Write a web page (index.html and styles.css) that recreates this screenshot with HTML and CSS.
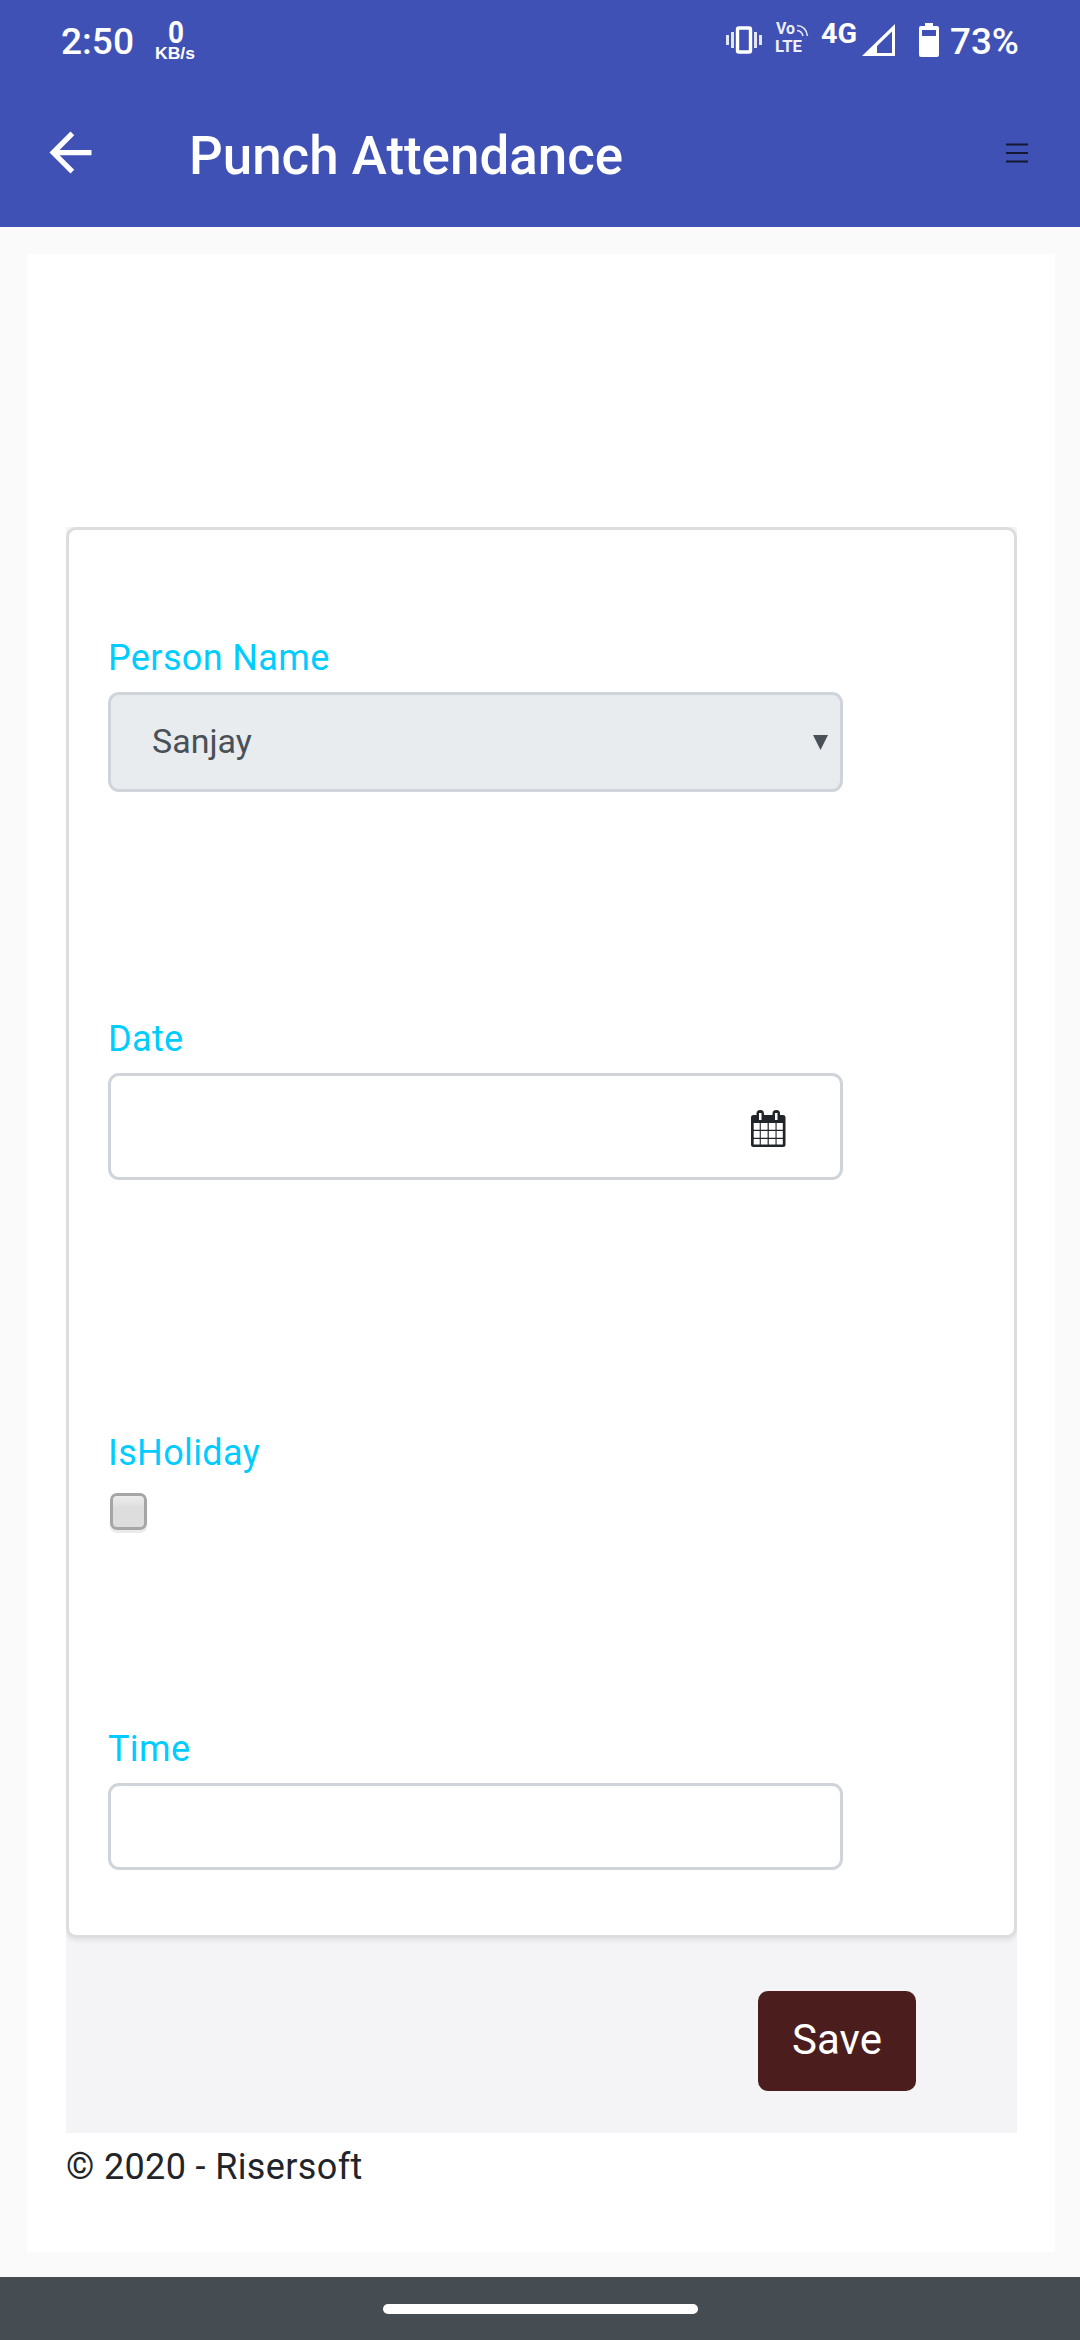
FILE: index.html
```html
<!DOCTYPE html>
<html lang="en">
<head>
<meta charset="utf-8">
<title>Punch Attendance</title>
<link rel="stylesheet" href="styles.css">
</head>
<body>
<div class="screen">
  <header class="top">
    <div class="statusbar">
      <svg class="status-left" width="150" height="80" viewBox="60 0 150 80">
        <text class="status-text" x="61" y="54" textLength="73" lengthAdjust="spacingAndGlyphs">2:50</text>
        <text class="speed" x="168" y="43" textLength="16" lengthAdjust="spacingAndGlyphs">0</text>
        <text class="unit" x="155" y="59" textLength="40" lengthAdjust="spacingAndGlyphs">KB/s</text>
      </svg>
      <svg class="status-right" width="300" height="80" viewBox="720 0 300 80">
        <rect x="737.5" y="28" width="13" height="24" rx="1.5" fill="none" stroke="#fff" stroke-width="3.4"/>
        <path d="M727.5 35v10M732.5 32v16M755.5 32v16M760.5 35v10" stroke="#fff" stroke-width="3" opacity=".85"/>
        <text class="volte" x="776" y="34" textLength="19" lengthAdjust="spacingAndGlyphs">Vo</text>
        <text class="volte" x="775" y="52" textLength="27" lengthAdjust="spacingAndGlyphs">LTE</text>
        <path d="M797 25.500Q806 26 807.500 36M797 30.500Q802 31 803 36" stroke="#fff" stroke-width="1.600" fill="none" opacity=".85"/>
        <text class="net" x="821" y="43" textLength="36" lengthAdjust="spacingAndGlyphs">4G</text>
        <path d="M895 24v32h-33z M892 31.500L877 46v7h15z" fill="#fff" fill-rule="evenodd"/>
        <path d="M925 23h8v3h4q2 0 2 2v27q0 2-2 2h-16q-2 0-2-2v-27q0-2 2-2h4z M922 30v6h14v-6z" fill="#fff" fill-rule="evenodd"/>
        <text class="status-text" x="950" y="54" textLength="69" lengthAdjust="spacingAndGlyphs">73%</text>
      </svg>
    </div>
    <div class="appbar">
      <svg class="back" viewBox="0 0 24 24"><path d="M20 11H7.830l5.590-5.590L12 4l-8 8 8 8 1.410-1.410L7.830 13H20z" fill="#fff"/></svg>
      <h1 class="title">Punch Attendance</h1>
      <svg class="menu" viewBox="0 0 22 22"><path d="M0 1.500h22M0 10h22M0 18.500h22" stroke="#151832" stroke-width="2"/></svg>
    </div>
  </header>
  <main class="page">
    <section class="panel">
      <div class="card">
        <div class="field person">
          <label class="label">Person Name</label>
          <div class="control select"><span>Sanjay</span>
            <svg width="15" height="15" viewBox="0 0 15 15"><path d="M0 0h15L7.500 15z" fill="#495057"/></svg>
          </div>
        </div>
        <div class="field date">
          <label class="label">Date</label>
          <div class="control date-box">
            <svg width="35" height="37" viewBox="0 0 35 37">
              <rect x="0" y="5" width="34.500" height="32" rx="2.500" fill="#212529"/>
              <rect x="5.500" y="0" width="7.500" height="12" rx="3.500" fill="#212529"/>
              <rect x="21.500" y="0" width="7.500" height="12" rx="3.500" fill="#212529"/>
              <path d="M8 3h2.500v7h-2.500zM24 3h2.500v7h-2.500z" fill="#fff"/>
              <path d="M2.700 13h6v6.700h-6zM9.800 13h6.800v6.700h-6.800zM17.800 13h6.700v6.700h-6.700zM25.600 13h6.200v6.700h-6.200zM2.700 21h6v6.700h-6zM9.800 21h6.800v6.700h-6.800zM17.800 21h6.700v6.700h-6.700zM25.600 21h6.200v6.700h-6.200zM2.700 29h6v5.500h-6zM9.800 29h6.800v5.500h-6.800zM17.800 29h6.700v5.500h-6.700zM25.600 29h6.200v5.500h-6.200z" fill="#fff"/>
            </svg>
          </div>
        </div>
        <div class="field holiday">
          <label class="label">IsHoliday</label>
          <div class="checkbox"></div>
        </div>
        <div class="field time">
          <label class="label">Time</label>
          <div class="control time-box"></div>
        </div>
      </div>
      <div class="actions"><button class="save">Save</button></div>
    </section>
    <footer class="footer">© 2020 - Risersoft</footer>
  </main>
  <nav class="navbar"><div class="pill"></div></nav>
</div>
</body>
</html>
```
FILE: styles.css
```css
* { box-sizing: border-box; }
body { margin: 0; background: #fafafa; font-family: Roboto, "Liberation Sans", sans-serif; }
svg { display: block; flex: none; }
.screen { width: 1080px; height: 2340px; display: flex; flex-direction: column; overflow: hidden; }

.top { height: 227px; background: #3f51b5; }
.statusbar { height: 80px; padding: 0 60px; display: flex; justify-content: space-between; }
.status-text { font-size: 37.5px; font-weight: 500; fill: #fff; }
.speed { font-size: 31px; font-weight: 700; fill: #fff; }
.unit { font: 700 17px "Liberation Sans", sans-serif; fill: #fff; }
.volte { font-size: 16.500px; font-weight: 700; fill: #eef; }
.net { font-size: 27.5px; font-weight: 700; fill: #fff; }

.appbar { height: 147px; padding: 0 52px 0 39px; display: flex; align-items: flex-start; }
.back { width: 63px; height: 63px; margin-top: 41px; }
.title { margin: 44px 0 0 87px; font-size: 52.9px; line-height: 65px; font-weight: 500; color: #fff; white-space: nowrap; }
.menu { width: 22px; height: 22px; margin: 63px 0 0 auto; }

.page { width: 1028px; height: 1998px; margin: 27px 0 25px 27px; padding: 273px 38px 0 39px; background: #fff; }
.panel { width: 951px; height: 1606px; background: #f4f4f7; overflow: hidden; }
.card { height: 1411px; padding: 101px 39px 0; background: #fff; border: 3px solid #ddd; border-radius: 10px; box-shadow: 0 3px 4px rgba(0, 0, 0, .07); }
.label { display: block; height: 61px; font-size: 36px; line-height: 54px; letter-spacing: .37px; color: #00ccff; }
.control { width: 735px; border: 3px solid #ced4da; border-radius: 11px; background: #fff; }
.person { height: 381px; }
.date { height: 414px; }
.holiday { height: 296px; }
.select { height: 100px; padding: 0 12px 2px 41px; display: flex; align-items: center; justify-content: space-between; background: #e8ecef; color: #495057; font-size: 34px; line-height: 40px; }
.select svg { margin-top: 2px; }
.date-box { height: 107px; padding: 34px 0 0 640px; }
.time-box { height: 87px; }
.checkbox { width: 37px; height: 37px; margin: 6px 0 0 2px; border: 3px solid #a6a6a6; border-radius: 7px; background: linear-gradient(#ededed, #ddd 38%, #ddd); box-shadow: 0 3px 1px #eaeaea; }
.actions { padding: 53px 101px 0 0; display: flex; justify-content: flex-end; }
.save { width: 158px; height: 100px; padding: 0 0 3px; border: 0; border-radius: 10px; background: #4b1d1d; color: #fff; font-family: inherit; font-size: 42px; line-height: 63px; }
.footer { margin-top: 7px; font-size: 36px; line-height: 54px; letter-spacing: .36px; color: #212529; }

.navbar { height: 63px; padding-top: 27px; background: #454d52; }
.pill { width: 315px; height: 10px; margin: 0 auto; border-radius: 5px; background: #fff; }
```
